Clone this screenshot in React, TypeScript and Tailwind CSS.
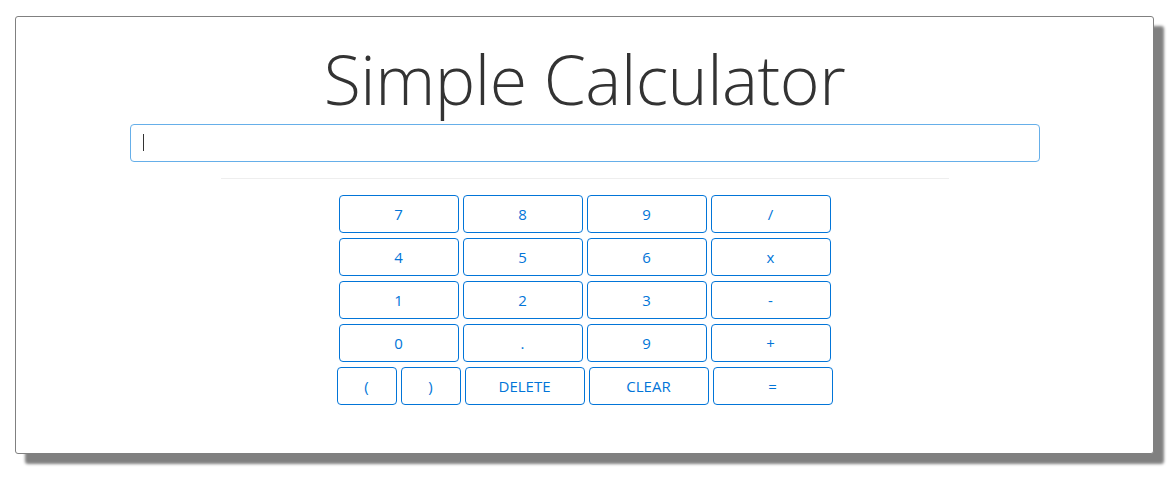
import React, { useState } from 'react';

const rows = [
  ['7', '8', '9', '/'],
  ['4', '5', '6', 'x'],
  ['1', '2', '3', '-'],
  ['0', '.', '9', '+'],
];

function Key({ label, wide, onPress }: { label: string; wide?: boolean; onPress: (v: string) => void }) {
  return (
    <button
      onClick={() => onPress(label)}
      className={`${wide ? 'w-[120px]' : 'w-[60px]'} h-[38px] rounded-[4px] border border-[#0275d8] bg-white text-[15px] text-[#0275d8] leading-none`}
    >
      {label}
    </button>
  );
}

export default function App() {
  const [expr, setExpr] = useState('');

  const press = (v: string) => {
    if (v === 'CLEAR') return setExpr('');
    if (v === 'DELETE') return setExpr((e) => e.slice(0, -1));
    if (v === '=') {
      try {
        // eslint-disable-next-line no-new-func
        const r = Function(`return (${expr.replace(/x/g, '*')})`)();
        setExpr(String(r));
      } catch {
        setExpr('Error');
      }
      return;
    }
    setExpr((e) => e + v);
  };

  return (
    <div className="w-[1174px] h-[483px] bg-white pt-4 pl-[15px]" style={{ fontFamily: '"Open Sans", "Noto Sans", sans-serif' }}>
      <div className="w-[1139px] h-[438px] rounded-[3px] border border-[#808080] bg-white shadow-[10px_10px_3px_#808080] flex flex-col items-center">
        {/* 标题 */}
        <h1 className="mt-[19px] text-[68px] font-light leading-[86px] text-[#333333] tracking-[-0.5px]">
          Simple Calculator
        </h1>

        {/* 输入框 */}
        <div className="relative mt-[2px] w-[910px] h-[38px] rounded-[4px] border border-[#66afe9] flex items-center px-3">
          {expr === '' && <span className="absolute left-3 top-[9px] w-px h-[17px] bg-[#333]" />}
          <input
            value={expr}
            onChange={(e) => setExpr(e.target.value)}
            className="w-full h-full outline-none text-[16px] text-[#333] caret-[#333] bg-transparent"
          />
        </div>

        {/* 分割线 */}
        <div className="mt-4 w-[728px] h-px bg-[#eeeeee]" />

        {/* 按键 */}
        <div className="mt-4 flex flex-col gap-[5px] items-center">
          {rows.map((r, i) => (
            <div key={i} className="flex gap-1">
              {r.map((k, j) => (
                <Key key={j} label={k} wide onPress={press} />
              ))}
            </div>
          ))}
          <div className="flex gap-1">
            <Key label="(" onPress={press} />
            <Key label=")" onPress={press} />
            <Key label="DELETE" wide onPress={press} />
            <Key label="CLEAR" wide onPress={press} />
            <Key label="=" wide onPress={press} />
          </div>
        </div>
      </div>
    </div>
  );
}
